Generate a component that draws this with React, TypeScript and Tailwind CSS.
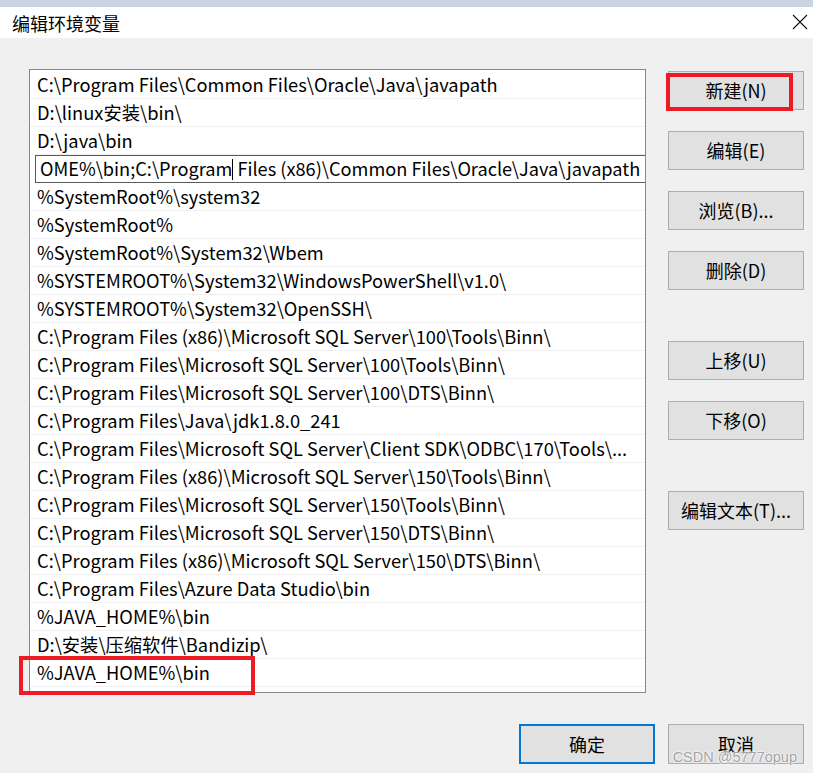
import React from 'react';

const paths = [
  'C:\\Program Files\\Common Files\\Oracle\\Java\\javapath',
  'D:\\linux安装\\bin\\',
  'D:\\java\\bin',
  null,
  '%SystemRoot%\\system32',
  '%SystemRoot%',
  '%SystemRoot%\\System32\\Wbem',
  '%SYSTEMROOT%\\System32\\WindowsPowerShell\\v1.0\\',
  '%SYSTEMROOT%\\System32\\OpenSSH\\',
  'C:\\Program Files (x86)\\Microsoft SQL Server\\100\\Tools\\Binn\\',
  'C:\\Program Files\\Microsoft SQL Server\\100\\Tools\\Binn\\',
  'C:\\Program Files\\Microsoft SQL Server\\100\\DTS\\Binn\\',
  'C:\\Program Files\\Java\\jdk1.8.0_241',
  'C:\\Program Files\\Microsoft SQL Server\\Client SDK\\ODBC\\170\\Tools\\...',
  'C:\\Program Files (x86)\\Microsoft SQL Server\\150\\Tools\\Binn\\',
  'C:\\Program Files\\Microsoft SQL Server\\150\\Tools\\Binn\\',
  'C:\\Program Files\\Microsoft SQL Server\\150\\DTS\\Binn\\',
  'C:\\Program Files (x86)\\Microsoft SQL Server\\150\\DTS\\Binn\\',
  'C:\\Program Files\\Azure Data Studio\\bin',
  '%JAVA_HOME%\\bin',
  'D:\\安装\\压缩软件\\Bandizip\\',
  '%JAVA_HOME%\\bin',
];

const ui = { fontFamily: '"Noto Sans CJK SC", "Noto Sans", sans-serif' };

function SideButton({ label, className = '' }: { label: string; className?: string }) {
  return (
    <div
      className={`flex h-[39px] w-[136px] items-center justify-center border border-[#adadad] bg-[#e1e1e1] text-[18px] text-black ${className}`}
    >
      {label}
    </div>
  );
}

export default function App() {
  return (
    <div className="relative h-[773px] w-[813px] overflow-hidden bg-[#f0f0f0]" style={ui}>
      <div className="h-[7px] bg-[#cbd4e2]" />
      <div className="flex h-[31px] items-center justify-between bg-white pl-[12px] pr-[5px]">
        <span className="text-[18px] leading-none text-black">编辑环境变量</span>
        <svg width="16" height="16" viewBox="0 0 16 16" className="mb-[2px]">
          <path d="M1 1 L15 15 M15 1 L1 15" stroke="#111" strokeWidth="1.1" fill="none" />
        </svg>
      </div>

      <div className="flex pl-[29px] pt-[31px]">
        <div className="h-[624px] w-[617px] border border-[#828790] bg-white pt-[1px]">
          {paths.map((p, i) =>
            p === null ? (
              <div key={i} className="flex h-[28px] items-center pl-[5px]">
                <div className="flex h-[28px] w-full items-center overflow-hidden whitespace-pre border-y border-l border-[#5a5a5a] bg-white pl-[4px] text-[18.2px] text-black">
                  <span>OME%\bin;C:\Program</span>
                  <span className="inline-block h-[21px] w-[1px] bg-black" />
                  <span> Files (x86)\Common Files\Oracle\Java\javapath</span>
                </div>
              </div>
            ) : (
              <div
                key={i}
                className="flex h-[28px] items-center whitespace-nowrap border-b border-[#f0f0f0] pl-[7px] text-[18.3px] text-black"
              >
                {p}
              </div>
            ),
          )}
        </div>

        <div className="ml-[22px] flex flex-col pt-[2px]">
          <SideButton label="新建(N)" />
          <SideButton label="编辑(E)" className="mt-[21px]" />
          <SideButton label="浏览(B)..." className="mt-[21px]" />
          <SideButton label="删除(D)" className="mt-[21px]" />
          <SideButton label="上移(U)" className="mt-[51px]" />
          <SideButton label="下移(O)" className="mt-[21px]" />
          <SideButton label="编辑文本(T)..." className="mt-[51px]" />
        </div>
      </div>

      <div className="mt-[31px] flex justify-end gap-[13px] pr-[9px]">
        <div className="flex h-[40px] w-[136px] items-center justify-center border-2 border-[#0078d7] bg-[#e1e1e1] text-[18px] text-black">
          确定
        </div>
        <div className="flex h-[40px] w-[136px] items-center justify-center border border-[#adadad] bg-[#e1e1e1] text-[18px] text-black">
          取消
        </div>
      </div>

      {/* annotation boxes */}
      <div className="absolute left-[666px] top-[73px] h-[38px] w-[127px] border-[4px] border-[#ed1c24]" />
      <div className="absolute left-[19px] top-[656px] h-[39px] w-[236px] border-[4px] border-[#ed1c24]" />

      <div
        className="absolute bottom-[9px] right-[16px] text-[14.5px] leading-none text-[#a2a2a2]"
        style={{ fontFamily: '"Liberation Sans", sans-serif', textShadow: '0 0 1px #fff, 0 0 2px #fff, 0 0 2px #fff' }}
      >
        CSDN @5777opup
      </div>
    </div>
  );
}
